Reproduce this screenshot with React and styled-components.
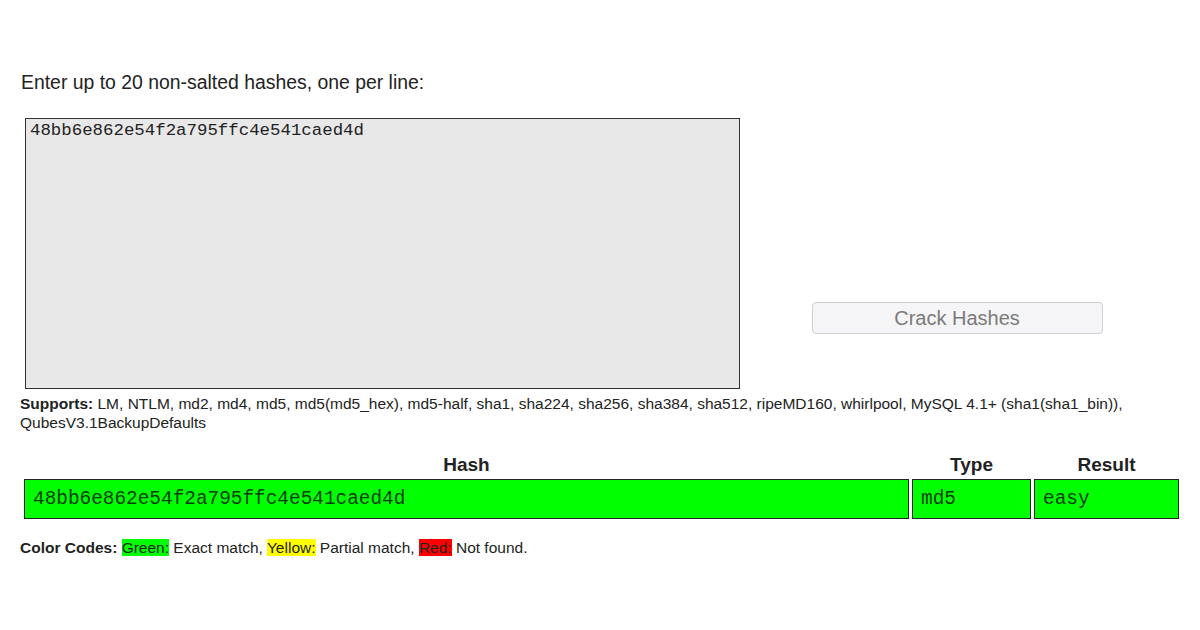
import React, { useState } from "react";
import styled, { createGlobalStyle } from "styled-components";

const GlobalStyle = createGlobalStyle`
  body {
    margin: 0;
    background: #fff;
    font-family: "Liberation Sans", Arial, sans-serif;
    color: #222;
  }
`;

const Page = styled.div`
  padding: 71px 20px 0 20px;
`;

const Intro = styled.p`
  margin: 0 0 25px 1px;
  font-size: 19.4px;
  line-height: 22px;
`;

const FormRow = styled.div`
  display: flex;
  align-items: stretch;
`;

const HashInput = styled.textarea`
  box-sizing: border-box;
  width: 715px;
  height: 271px;
  margin-left: 5px;
  padding: 2px 4px;
  border: 1px solid #333;
  background: #e8e8e8;
  font-family: "Liberation Mono", "Courier New", monospace;
  font-size: 17.4px;
  line-height: 20px;
  color: #222;
  resize: none;
  outline: none;
`;

const Side = styled.div`
  flex: 1;
  display: flex;
  flex-direction: column;
  justify-content: flex-end;
  align-items: center;
  padding: 0 6px 55px 0;
`;

const CrackButton = styled.button`
  width: 291px;
  height: 32px;
  border: 1px solid #cfcfd3;
  border-radius: 4px;
  background: #f5f5f7;
  color: #7a7a7a;
  font-family: "Liberation Sans", Arial, sans-serif;
  font-size: 20px;
  cursor: pointer;
`;

const Supports = styled.p`
  margin: 5px 0 0 0;
  font-size: 15.5px;
  line-height: 19px;
  color: #222;
`;

const Results = styled.table`
  width: calc(100% + 1px);
  margin: 19px 0 0 1px;
  border-spacing: 3px;
  font-size: 19px;
`;

const Th = styled.th`
  padding: 0;
  height: 22px;
  font-weight: bold;
  text-align: center;
  color: #222;
  width: ${(p) => p.$width || "auto"};
`;

const Td = styled.td`
  height: 40px;
  box-sizing: border-box;
  padding: 0 8px;
  border: 1px solid #222;
  background: ${(p) => p.$bg};
  font-family: "Liberation Mono", "Courier New", monospace;
  font-size: 19.4px;
  color: #0b3d0b;
`;

const Legend = styled.p`
  margin: 16px 0 0 0;
  font-size: 15.5px;
  line-height: 19px;
`;

const Swatch = styled.span`
  background: ${(p) => p.$bg};
`;

const rows = [
  { hash: "48bb6e862e54f2a795ffc4e541caed4d", type: "md5", result: "easy", bg: "#00ff00" },
];

export default function App() {
  const [hashes, setHashes] = useState("48bb6e862e54f2a795ffc4e541caed4d");

  return (
    <Page>
      <GlobalStyle />
      <Intro>Enter up to 20 non-salted hashes, one per line:</Intro>
      <FormRow>
        <HashInput value={hashes} onChange={(e) => setHashes(e.target.value)} spellCheck={false} />
        <Side>
          <CrackButton type="button">Crack Hashes</CrackButton>
        </Side>
      </FormRow>
      <Supports>
        <b>Supports:</b> LM, NTLM, md2, md4, md5, md5(md5_hex), md5-half, sha1, sha224, sha256, sha384, sha512,
        ripeMD160, whirlpool, MySQL 4.1+ (sha1(sha1_bin)), QubesV3.1BackupDefaults
      </Supports>
      <Results>
        <thead>
          <tr>
            <Th>Hash</Th>
            <Th $width="119px">Type</Th>
            <Th $width="145px">Result</Th>
          </tr>
        </thead>
        <tbody>
          {rows.map((r) => (
            <tr key={r.hash}>
              <Td $bg={r.bg}>{r.hash}</Td>
              <Td $bg={r.bg}>{r.type}</Td>
              <Td $bg={r.bg}>{r.result}</Td>
            </tr>
          ))}
        </tbody>
      </Results>
      <Legend>
        <b>Color Codes:</b> <Swatch $bg="#00ff00">Green:</Swatch> Exact match,{" "}
        <Swatch $bg="#ffff00">Yellow:</Swatch> Partial match, <Swatch $bg="#ff0000">Red:</Swatch> Not found.
      </Legend>
    </Page>
  );
}
